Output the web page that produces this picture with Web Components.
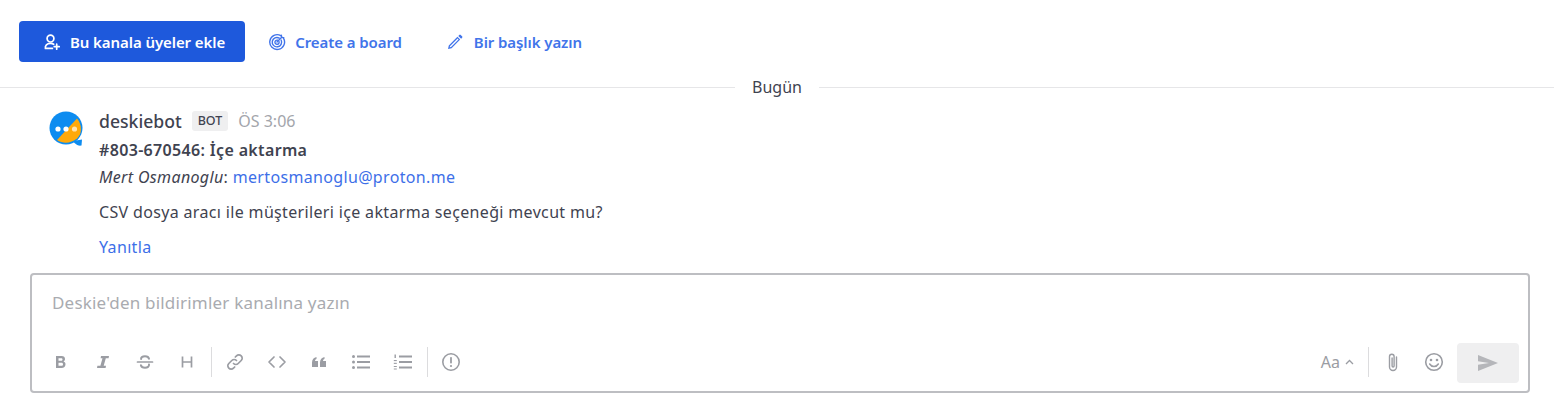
<!DOCTYPE html>
<html lang="tr">
<head>
<meta charset="utf-8">
<title>Deskie</title>
<style>
html, body { margin: 0; padding: 0; background: #fff; }
body { font-family: "Noto Sans", "Open Sans", sans-serif; color: #3f4350; width: 1560px; height: 414px; overflow: hidden; }
</style>
</head>
<body>
<channel-intro>
  <intro-action primary label="Bu kanala üyeler ekle" icon="user"></intro-action>
  <intro-action label="Create a board" icon="target"></intro-action>
  <intro-action label="Bir başlık yazın" icon="pencil"></intro-action>
</channel-intro>
<date-separator>Bugün</date-separator>
<bot-post></bot-post>
<message-editor placeholder="Deskie'den bildirimler kanalına yazın"></message-editor>

<script>
const ICONS = {
  user: '<svg width="18" height="18" viewBox="0 0 18 18" fill="none" stroke="currentColor" stroke-width="1.7" stroke-linecap="round"><circle cx="7.5" cy="5.6" r="3.4"/><path d="M2.4 15.4c-.5-3 1.500-5 5-5 1.400 0 2.500.3 3.300.9M2.400 15.400h7"/><path d="M13.700 11.200v5M11.200 13.700h5"/></svg>',
  target: '<svg width="18" height="18" viewBox="0 0 18 18" fill="none" stroke="currentColor" stroke-width="1.400" stroke-linecap="round"><path d="M12.800 2.600A7.400 7.400 0 1 0 15.600 5.400"/><path d="M11.300 5.100A4.700 4.700 0 1 0 13.100 7"/><path d="M9.600 7.200A2.100 2.100 0 1 0 11 8.500"/><path d="M9 9l5-5M13.400 2.200v2.400h2.400" /></svg>',
  pencil: '<svg width="16" height="16" viewBox="0 0 16 16" fill="currentColor"><path d="M1 15l.8-3.600L10.400 2.800l2.800 2.800L4.600 14.200 1 15zm2.100-3l-.4 1.300 1.300-.4 7.500-7.500-.9-.9L3.100 12z"/><path d="M11.300 1.900l1-1a1 1 0 0 1 1.400 0l1.400 1.400a1 1 0 0 1 0 1.400l-1 1-2.800-2.800z"/></svg>'
};

class ChannelIntro extends HTMLElement {
  constructor() {
    super()
    this.attachShadow({ mode: 'open' }).innerHTML = `
    <style>
      :host { display: flex; align-items: center; height: 41px; padding: 21px 0 0 19px; box-sizing: content-box; }
    </style>
    <slot></slot>`
  }
}

class IntroAction extends HTMLElement {
  constructor() {
    super()
    const primary = this.hasAttribute('primary')
    const icon = this.getAttribute('icon')
    this.attachShadow({ mode: 'open' }).innerHTML = `
    <style>
      :host { display: inline-flex; align-items: center; height: 41px; box-sizing: border-box; border-radius: 4px;
        font-size: 15px; font-weight: 600; letter-spacing: -.08px; gap: ${icon == 'pencil' ? 11 : 9}px;
        color: ${primary ? '#fff' : '#4174ea'}; background: ${primary ? '#1e59dc' : 'transparent'};
        padding: 0 ${primary ? 20 : 21}px 0 ${icon == 'target' ? 23 : 24}px; }
      svg { display: block; }
      span { white-space: nowrap; }
    </style>
    ${ICONS[icon]}<span>${this.getAttribute('label')}</span>`
  }
}

class DateSeparator extends HTMLElement {
  constructor() {
    super()
    this.attachShadow({ mode: 'open' }).innerHTML = `
    <style>
      :host { display: flex; align-items: center; height: 24px; margin-top: 13px; padding-right: 6px; font-size: 16px; color: #3f4350; }
      i { flex: 1; height: 1px; background: #e6e6e8; }
      span { padding: 0 17px; }
    </style>
    <i></i><span><slot></slot></span><i></i>`
  }
}

class BotPost extends HTMLElement {
  constructor() {
    super()
    this.attachShadow({ mode: 'open' }).innerHTML = `
    <style>
      :host { display: flex; padding: 12px 0 0 49px; height: 174px; box-sizing: border-box; font-size: 16px; letter-spacing: .34px; color: #3f4350; }
      .avatar { width: 34px; height: 36px; margin-right: 16px; flex: none; }
      .head { display: flex; align-items: center; height: 20px; gap: 10px; letter-spacing: 0; }
      .name { font-size: 17.600px; font-weight: 500; }
      .bot { font-size: 12.500px; font-weight: 500; line-height: 20px; padding: 0 6px; border-radius: 3px; background: #efeff0; }
      .time { font-size: 16px; color: #a3a5ab; }
      .title { font-weight: 600; line-height: 20px; margin-top: 9px; }
      .from { line-height: 20px; margin-top: 7px; }
      .msg { line-height: 20px; margin-top: 15px; }
      .reply { line-height: 20px; margin-top: 15px; }
      a { color: #3d6fe8; text-decoration: none; }
    </style>
    <svg class="avatar" viewBox="0 0 34 36">
      <path d="M24 30L33 28.500 32.500 34.500C30 35 27.500 34 25.500 32z" fill="#0d8cf0"/>
      <circle cx="17" cy="17" r="16.500" fill="#0d8cf0"/>
      <path d="M8 29L28 7.500C33.500 14 33 23 28 27.500 22 32.500 14 33 8 29z" fill="#ffa90a"/>
      <circle cx="9" cy="18" r="2.600" fill="#fff"/>
      <circle cx="17" cy="18" r="2.600" fill="#fff"/>
      <circle cx="25.500" cy="18" r="2.600" fill="#ffe3b0"/>
    </svg>
    <div>
      <div class="head"><span class="name">deskiebot</span><span class="bot">BOT</span><span class="time">ÖS 3:06</span></div>
      <div class="title">#803-670546: İçe aktarma</div>
      <div class="from"><em>Mert Osmanoglu</em>: <a>mertosmanoglu@proton.me</a></div>
      <div class="msg">CSV dosya aracı ile müşterileri içe aktarma seçeneği mevcut mu?</div>
      <div class="reply"><a>Yanıtla</a></div>
    </div>`
  }
}

class EditorTool extends HTMLElement {
  constructor() {
    super()
    this.attachShadow({ mode: 'open' }).innerHTML = `
    <style>
      :host { display: flex; align-items: center; justify-content: center; width: 42px; height: 32px; margin-bottom: 2px; color: #9b9da3; }
      svg { display: block; }
    </style>
    <slot></slot>`
  }
}

class MessageEditor extends HTMLElement {
  constructor() {
    super()
    const s = (w, h, body) => `<svg xmlns="http://www.w3.org/2000/svg" width="${w}" height="${h}" viewBox="0 0 ${w} ${h}">${body}</svg>`
    const line = 'fill="none" stroke="currentColor" stroke-width="1.700" stroke-linecap="round" stroke-linejoin="round"'
    this.attachShadow({ mode: 'open' }).innerHTML = `
    <style>
      :host { display: block; margin-left: 30px; width: 1500px; height: 120px; box-sizing: border-box; border: 2px solid #bdbec2; border-radius: 4px; background: #fff; }
      .input { height: 68px; padding: 17px 0 0 20px; box-sizing: border-box; font-size: 17px; letter-spacing: .2px; line-height: 22px; color: #a9abb0; }
      .bar { display: flex; align-items: center; height: 40px; padding: 0 9px 0 8px; }
      .sep { width: 1px; height: 30px; background: #dcdcde; flex: none; margin: 0 2px 2px 3px; }
      .spacer { flex: 1; }
      .aa { font-size: 16px; color: #9b9da3; display: flex; align-items: center; gap: 5px; margin-right: 14px; margin-bottom: 2px; }
      .send { width: 62px; height: 40px; margin-left: 2px; background: #efeff0; border-radius: 4px; display: flex; align-items: center; justify-content: center; color: #b5b6ba; }
    </style>
    <div class="input">${this.getAttribute('placeholder')}</div>
    <div class="bar">
      <editor-tool>${s(16, 16, '<path d="M3 2h5.500c2.300 0 3.500 1.200 3.500 3 0 1.200-.6 2-1.500 2.500 1.300.4 2 1.400 2 2.800 0 2.200-1.500 3.700-4 3.700H3V2zm2.500 2.200v2.500h2.600c.9 0 1.400-.5 1.400-1.300s-.5-1.200-1.400-1.200H5.500zm0 4.500v3.100h2.900c1.100 0 1.600-.6 1.600-1.600s-.6-1.500-1.600-1.500H5.500z" fill="currentColor"/>')}</editor-tool>
      <editor-tool>${s(16, 16, '<path d="M6 2h8l-.4 2.200h-2.800L8.700 11.800h2.300L10.600 14H2l.4-2.200h3L7.500 4.200H5.600z" fill="currentColor"/>')}</editor-tool>
      <editor-tool>${s(18, 16, `<path d="M1.500 8h15" ${line}/><path d="M13 4.800C12.700 3.200 11 2.200 9 2.200c-2.400 0-3.900 1.100-3.900 2.700M13 10.500c.3 2-1.500 3.300-4 3.300-2.200 0-3.700-.9-4.100-2.500" fill="none" stroke="currentColor" stroke-width="2" stroke-linecap="round"/>`)}</editor-tool>
      <editor-tool>${s(14, 16, `<path d="M2.500 2.500v11M11.500 2.500v11M2.500 8h9" fill="none" stroke="currentColor" stroke-width="1.700"/>`)}</editor-tool>
      <span class="sep"></span>
      <editor-tool>${s(20, 20, `<path d="M8.500 11.500a3.300 3.300 0 0 0 4.700 0l3-3a3.300 3.300 0 0 0-4.700-4.700l-1.200 1.200M11.500 8.500a3.300 3.300 0 0 0-4.700 0l-3 3a3.300 3.300 0 0 0 4.700 4.700l1.200-1.200" ${line}/>`)}</editor-tool>
      <editor-tool>${s(20, 16, `<path d="M7 3L2 8l5 5M13 3l5 5-5 5" ${line}/>`)}</editor-tool>
      <editor-tool>${s(16, 12, '<path d="M1 11V6.500C1 3.500 2.800 1.600 5.500 1v2C4.500 3.400 4 4.200 4 5h3v6H1zM9 11V6.500C9 3.500 10.800 1.600 13.500 1v2c-1 .4-1.500 1.200-1.500 2h3v6H9z" fill="currentColor"/>')}</editor-tool>
      <editor-tool>${s(20, 16, '<g fill="currentColor"><circle cx="2.500" cy="2.500" r="1.500"/><circle cx="2.500" cy="8" r="1.500"/><circle cx="2.500" cy="13.500" r="1.500"/><rect x="6" y="1.500" width="13" height="2"/><rect x="6" y="7" width="13" height="2"/><rect x="6" y="12.500" width="13" height="2"/></g>')}</editor-tool>
      <editor-tool>${s(20, 16, '<g fill="currentColor"><rect x="1.500" y="0.500" width="1.400" height="3.500"/><rect x="0.800" y="6" width="3" height="1.100"/><rect x="0.800" y="8.800" width="3" height="1.100"/><rect x="0.800" y="12" width="3" height="1"/><rect x="0.800" y="14.500" width="3" height="1"/><rect x="6" y="1.500" width="13" height="2"/><rect x="6" y="7" width="13" height="2"/><rect x="6" y="12.500" width="13" height="2"/></g>')}</editor-tool>
      <span class="sep"></span>
      <editor-tool>${s(20, 20, '<circle cx="10" cy="10" r="8.200" fill="none" stroke="currentColor" stroke-width="1.600"/><rect x="9.100" y="5" width="1.800" height="6.500" rx=".8" fill="currentColor"/><circle cx="10" cy="14" r="1.100" fill="currentColor"/>')}</editor-tool>
      <span class="spacer"></span>
      <span class="aa">Aa ${s(9, 6, '<path d="M1 5l3.500-3.500L8 5" fill="none" stroke="currentColor" stroke-width="1.300"/>')}</span>
      <span class="sep" style="margin:0 3px 2px 0"></span>
      <editor-tool style="width:41px">${s(14, 20, `<path d="M10.500 5v10a3.500 3.500 0 0 1-7 0V4.500a2.300 2.300 0 0 1 4.600 0V14a1 1 0 0 1-2 0V6" fill="none" stroke="currentColor" stroke-width="1.400" stroke-linecap="round"/>`)}</editor-tool>
      <editor-tool style="width:42px">${s(20, 20, `<circle cx="10" cy="10" r="8.300" fill="none" stroke="currentColor" stroke-width="1.600"/><circle cx="7" cy="8" r="1.300" fill="currentColor"/><circle cx="13" cy="8" r="1.300" fill="currentColor"/><path d="M5.700 12c1 1.700 2.500 2.500 4.300 2.500s3.300-.8 4.300-2.500" fill="none" stroke="currentColor" stroke-width="1.500" stroke-linecap="round"/>`)}</editor-tool>
      <span class="send">${s(20, 16, '<path d="M0 0l20 8-20 8 0-6.200L11 8 0 6.200z" fill="currentColor"/>')}</span>
    </div>`
  }
}

customElements.define('channel-intro', ChannelIntro)
customElements.define('intro-action', IntroAction)
customElements.define('date-separator', DateSeparator)
customElements.define('bot-post', BotPost)
customElements.define('editor-tool', EditorTool)
customElements.define('message-editor', MessageEditor)
</script>
</body>
</html>
